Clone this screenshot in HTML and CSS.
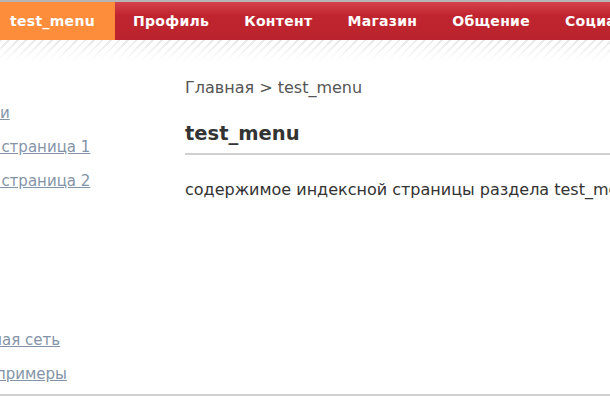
FILE: index.html
```html
<!DOCTYPE html>
<html lang="ru">
<head>
    <meta charset="UTF-8">
    <title>test_menu</title>
    <link rel="stylesheet" href="styles.css">
</head>
<body>
    <div class="top-menu">
        <a class="active" href="#">test_menu</a>
        <a href="#">Профиль</a>
        <a href="#">Контент</a>
        <a href="#">Магазин</a>
        <a href="#">Общение</a>
        <a href="#">Социальная сеть</a>
    </div>
    <div class="stripes"></div>
    <div class="layout">
        <div class="sidebar">
            <ul class="side-menu">
                <li><a href="#">Настройки</a></li>
                <li><a href="#">Тестовая страница 1</a></li>
                <li><a href="#">Тестовая страница 2</a></li>
            </ul>
            <ul class="side-menu side-bottom">
                <li><a href="#">Социальная сеть</a></li>
                <li><a href="#">Готовые примеры</a></li>
            </ul>
        </div>
        <div class="content">
            <div class="breadcrumbs">Главная &gt; test_menu</div>
            <h1>test_menu</h1>
            <p>содержимое индексной страницы раздела test_menu</p>
        </div>
    </div>
    <div class="bottom-line"></div>
</body>
</html>
```

FILE: styles.css
```css
body {
    margin: 0;
    padding: 0;
    font-family: "DejaVu Sans", Verdana, sans-serif;
    font-size: 16px;
    color: #333;
    background: #fff;
    overflow: hidden;
    width: 610px;
    height: 396px;
    position: relative;
}
.top-menu {
    display: flex;
    white-space: nowrap;
    height: 38px;
    border-top: 2px solid #b5b5b5;
    background: linear-gradient(#d4424b 0%, #c0252f 35%, #ba232d 100%);
    margin-left: -7px;
}
.top-menu a {
    display: block;
    padding: 0 17px 0 18px;
    line-height: 38px;
    color: #fff;
    font-weight: bold;
    font-size: 14px;
    letter-spacing: 0.3px;
    text-decoration: none;
}
.top-menu a.active {
    background: #fd8d3b;
    padding: 0 20px 0 17px;
}
.stripes {
    height: 20px;
    background:
        linear-gradient(rgba(255,255,255,0.1), #fff),
        repeating-linear-gradient(-45deg, #e6e6e6 0 2px, #fff 2px 6px);
}
.layout {
    display: flex;
}
.sidebar {
    width: 185px;
    flex-shrink: 0;
}
.side-menu {
    list-style: none;
    margin: 36px 0 0 -75px;
    padding: 0;
    font-size: 15px;
    white-space: nowrap;
}
.side-menu li {
    height: 34px;
    line-height: 34px;
}
.side-menu a {
    color: #8494a8;
}
.side-bottom {
    margin-top: 125px;
}
.content {
    flex: 1;
    white-space: nowrap;
}
.breadcrumbs {
    margin-top: 18px;
    line-height: 20px;
    color: #555;
}
h1 {
    font-size: 19.5px;
    line-height: 24px;
    margin: 24px 0 0;
    padding-bottom: 7px;
    border-bottom: 2px solid #d0d0d0;
}
p {
    margin: 25px 0 0;
    line-height: 20px;
}
.bottom-line {
    position: absolute;
    left: 0;
    right: 0;
    bottom: 0;
    height: 2px;
    background: #cfcfcf;
}
```
